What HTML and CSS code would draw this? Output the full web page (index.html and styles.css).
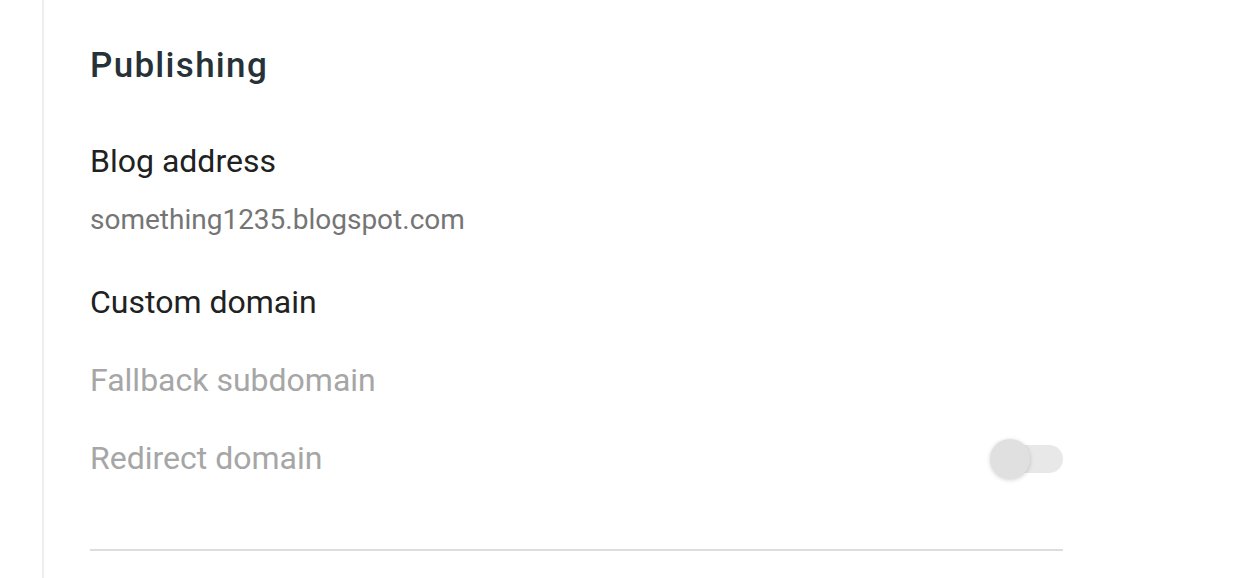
FILE: index.html
```html
<!DOCTYPE html>
<html lang="en">
<head>
    <meta charset="UTF-8">
    <meta name="viewport" content="width=device-width, initial-scale=1.0">
    <title>Settings - Publishing</title>
    <link rel="stylesheet" href="styles.css">
</head>
<body>

    <div class="painel">
        <div class="secao">
            <h2 class="titulo">Publishing</h2>

            <!-- Endereço do blog -->
            <div class="item">
                <div class="rotulo">Blog address</div>
                <div class="valor">something1235.blogspot.com</div>
            </div>

            <div class="item">
                <div class="rotulo">Custom domain</div>
            </div>

            <div class="item desativado">
                <div class="rotulo">Fallback subdomain</div>
            </div>

            <!-- Redirecionamento (chave desligada) -->
            <div class="item desativado linha">
                <div class="rotulo">Redirect domain</div>
                <span class="chave"><span class="bolinha"></span></span>
            </div>

            <hr class="divisor">
        </div>
    </div>

</body>
</html>
```

FILE: styles.css
```css
body {
    margin: 0;
    font-family: Roboto, "Liberation Sans", Arial, sans-serif;
    background: #fff;
}
.painel {
    margin-left: 42px;
    border-left: 2px solid #eeeeee;
    min-height: 578px;
    box-sizing: border-box;
    padding-left: 46px;
}
.secao {
    width: 973px;
    padding-top: 44px;
}
.titulo {
    margin: 0 0 53px 0;
    font-size: 35px;
    font-weight: 500;
    letter-spacing: 1.3px;
    color: #263238;
    line-height: 44px;
}
.item {
    margin-bottom: 38px;
}
.rotulo {
    font-size: 32px;
    line-height: 40px;
    color: #212121;
}
.valor {
    margin-top: 22px;
    padding-bottom: 7px;
    font-size: 28px;
    line-height: 34px;
    color: #757575;
}
.desativado .rotulo {
    color: #a6a6a6;
}
.linha {
    display: flex;
    align-items: center;
    justify-content: space-between;
}
.chave {
    position: relative;
    width: 63px;
    height: 28px;
    margin-top: 2px;
    border-radius: 14px;
    background: #e8e8e8;
}
.bolinha {
    position: absolute;
    left: -10px;
    top: -6px;
    width: 40px;
    height: 40px;
    border-radius: 50%;
    background: #e0e0e0;
    box-shadow: 0 1px 4px rgba(0, 0, 0, 0.18);
}
.divisor {
    margin: 71px 0 0 0;
    border: none;
    border-top: 2px solid #dddddd;
}
```
